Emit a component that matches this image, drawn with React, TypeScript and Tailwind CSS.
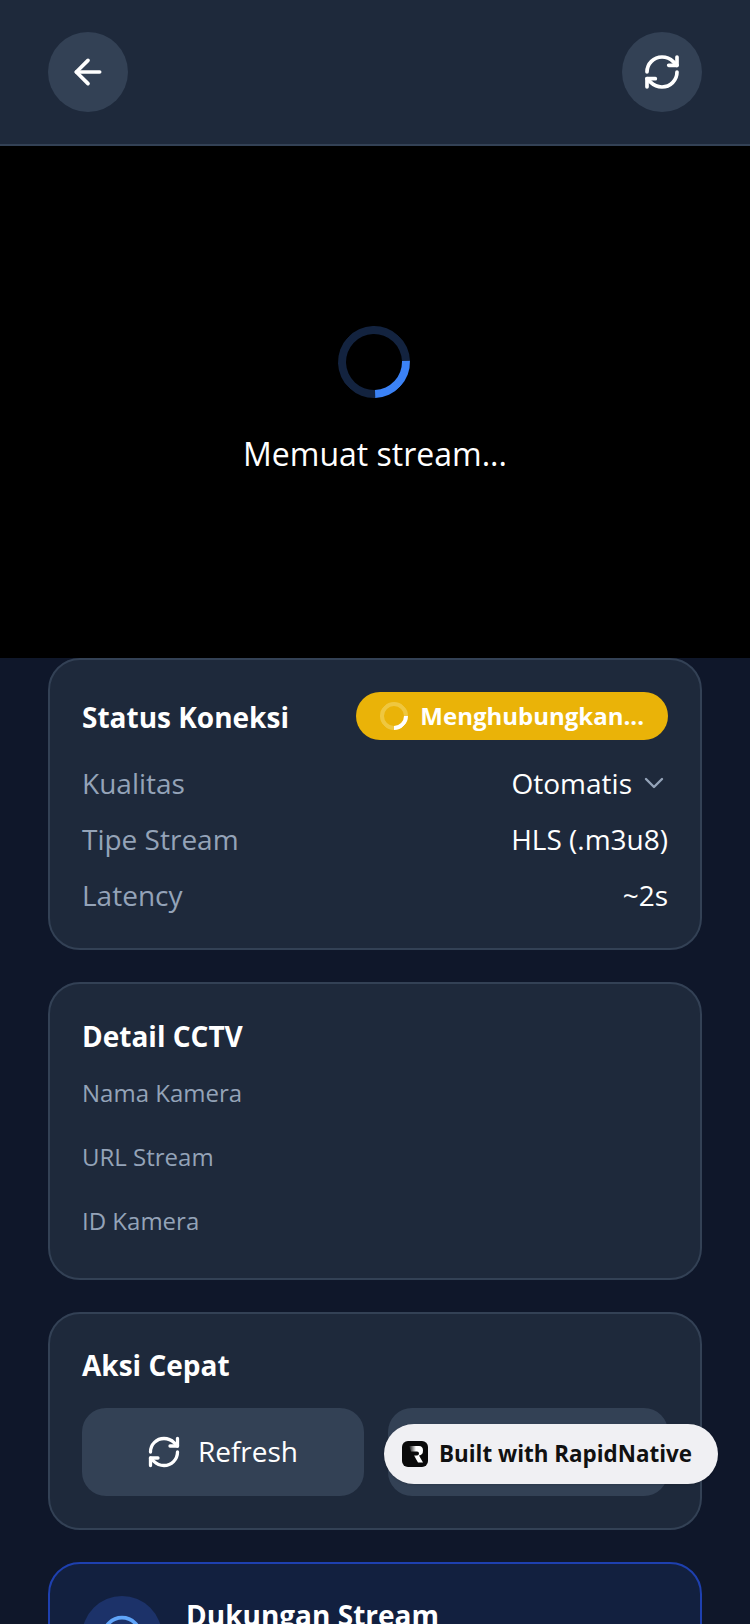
import { ArrowLeft, ChevronDown, RefreshCw, Info } from 'lucide-react';

function Row({ label, children }: { label: string; children: React.ReactNode }) {
  return (
    <div className="flex items-center justify-between h-[56px]">
      <span className="text-[28px] text-[#94a3b8]">{label}</span>
      {children}
    </div>
  );
}

function Detail({ label }: { label: string }) {
  return <div className="h-[64px] pt-[11px] text-[24px] leading-[36px] text-[#94a3b8]">{label}</div>;
}

export default function App() {
  return (
    <div className="relative h-[1624px] w-[750px] overflow-hidden bg-[#0f172a] font-['Open_Sans',sans-serif] text-white">
      {/* Top bar */}
      <header className="flex h-[146px] items-center justify-between border-b-2 border-[#334155] bg-[#1e293b] px-[48px]">
        <button className="flex h-[80px] w-[80px] items-center justify-center rounded-full bg-[#334155]">
          <ArrowLeft size={40} strokeWidth={2.2} />
        </button>
        <button className="flex h-[80px] w-[80px] items-center justify-center rounded-full bg-[#334155]">
          <RefreshCw size={40} strokeWidth={2.2} />
        </button>
      </header>

      {/* Player */}
      <div className="flex h-[512px] flex-col items-center justify-center bg-black">
        <div className="mr-[2px] h-[72px] w-[72px] rotate-[43deg] rounded-full border-[8px] border-[#13233f] border-r-[#3b82f6]" />
        <p className="mt-[32px] text-[32px] leading-[48px]">Memuat stream...</p>
      </div>

      <main className="flex flex-col gap-[32px] px-[48px]">
        <section className="h-[292px] rounded-[32px] border-2 border-[#334155] bg-[#1e293b] px-[32px] pt-[32px]">
          <div className="flex h-[48px] items-center justify-between">
            <h2 className="pt-[2px] text-[28px] font-bold">Status Koneksi</h2>
            <div className="flex h-[48px] items-center gap-[12px] rounded-full bg-[#eab308] px-[24px]">
              <span className="h-[28px] w-[28px] rotate-45 rounded-full border-[4px] border-[#efc73f] border-r-white" />
              <span className="text-[24px] font-bold">Menghubungkan...</span>
            </div>
          </div>
          <div className="mt-[15px]">
            <Row label="Kualitas">
              <span className="-mr-[2px] flex items-center gap-[6px] text-[28px]">
                Otomatis
                <ChevronDown size={32} strokeWidth={1.8} className="text-[#94a3b8]" />
              </span>
            </Row>
            <Row label="Tipe Stream">
              <span className="text-[28px]">HLS (.m3u8)</span>
            </Row>
            <Row label="Latency">
              <span className="text-[28px]">~2s</span>
            </Row>
          </div>
        </section>

        <section className="h-[298px] rounded-[32px] border-2 border-[#334155] bg-[#1e293b] px-[32px] pt-[32px]">
          <h2 className="mb-[8px] text-[28px] font-bold leading-[40px]">Detail CCTV</h2>
          <Detail label="Nama Kamera" />
          <Detail label="URL Stream" />
          <Detail label="ID Kamera" />
        </section>

        <section className="h-[218px] rounded-[32px] border-2 border-[#334155] bg-[#1e293b] px-[32px] pt-[31px]">
          <h2 className="text-[28px] font-bold leading-[40px]">Aksi Cepat</h2>
          <div className="mt-[23px] flex gap-[24px]">
            <button className="flex h-[88px] w-[282px] shrink-0 items-center justify-center gap-[16px] rounded-[24px] bg-[#334155] pr-[2px] text-[28px]">
              <RefreshCw size={36} strokeWidth={2.2} />
              <span className="-mt-[2px]">Refresh</span>
            </button>
            <button className="h-[88px] flex-1 rounded-[24px] bg-[#334155]" />
          </div>
        </section>

        <section className="h-[200px] rounded-[32px] border-2 border-[#1e40af] bg-[#12203f] px-[32px] pt-[32px]">
          <div className="flex gap-[24px]">
            <div className="flex h-[80px] w-[80px] shrink-0 items-center justify-center rounded-full bg-[#1c3269]">
              <Info size={44} className="text-[#60a5fa]" />
            </div>
            <h2 className="-mt-[1px] text-[28px] font-bold leading-[40px]">Dukungan Stream</h2>
          </div>
        </section>
      </main>

      {/* Floating badge */}
      <div className="absolute left-[384px] top-[1424px] flex h-[60px] w-[334px] items-center gap-[11px] rounded-full bg-[#f0f0f3] pl-[18px] shadow-sm">
        <svg width="26" height="26" viewBox="0 0 26 26">
          <defs>
            <linearGradient id="logoFade" x1="0" y1="0" x2="1" y2="0">
              <stop offset="0" stopColor="#0a0a0a" />
              <stop offset="0.5" stopColor="#fff" />
            </linearGradient>
          </defs>
          <rect width="26" height="26" rx="6" fill="#0a0a0a" />
          <path d="M7 5h10q4 0 4 4.5t-4 5l4 7h-5l-4-7h3q2 0 2-2t-2-2H9z" fill="url(#logoFade)" />
        </svg>
        <span className="text-[22.4px] font-bold text-[#111]">Built with RapidNative</span>
      </div>
    </div>
  );
}
